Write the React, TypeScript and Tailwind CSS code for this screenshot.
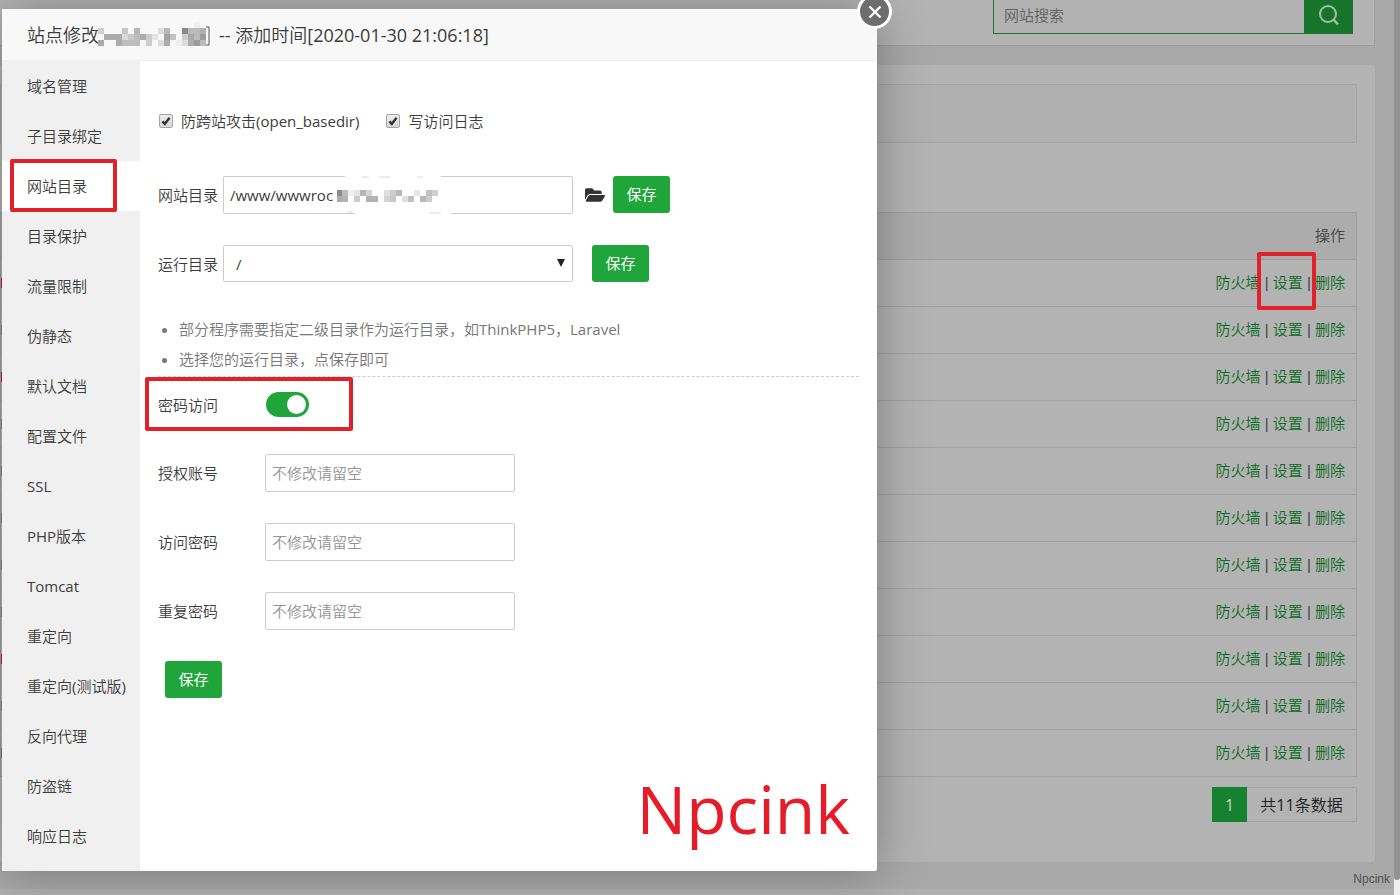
import { FaFolderOpen } from "react-icons/fa";

const menu = [
  "域名管理", "子目录绑定", "网站目录", "目录保护", "流量限制", "伪静态", "默认文档", "配置文件",
  "SSL", "PHP版本", "Tomcat", "重定向", "重定向(测试版)", "反向代理", "防盗链", "响应日志",
];

const rowMarks = [
  "bg-[#c41862]", "bg-[#8b8b7c]", "bg-[#c41862]", "bg-[#888888]", "bg-[#888888]", "bg-[#888888]",
  "bg-[#8b8b7c]", "bg-[#8b8b7c]", "bg-[#c41862]", "bg-[#8b8b7c]", "bg-[#7c7c6c]",
];

type Cell = [column: number, row: number, span: number, color: string];

const titleCells: Cell[] = [
  [1, 0, 1, "#d0d0d0"], [5, 0, 1, "#c6c6c6"], [7, 0, 1, "#b6b6b6"], [11, 0, 1, "#dddddd"], [12, 0, 1, "#b8b8b8"],
  [15, 0, 1, "#8a8a8a"], [16, 0, 2, "#bbbbbb"], [18, 0, 1, "#b0b0b0"],
  [2, 1, 3, "#acacac"], [5, 1, 1, "#dadada"], [6, 1, 1, "#c8c8c8"], [7, 1, 1, "#bcbcbc"], [8, 1, 1, "#acacac"],
  [9, 1, 1, "#cccccc"], [10, 1, 1, "#e4e4e4"], [12, 1, 1, "#a2a2a2"], [13, 1, 1, "#c2c2c2"], [15, 1, 1, "#cccccc"],
  [16, 1, 1, "#a8a8a8"], [17, 1, 1, "#bcbcbc"], [18, 1, 1, "#9c9c9c"],
  [1, 2, 1, "#aaaaaa"], [4, 2, 1, "#acacac"], [5, 2, 3, "#bdbdbd"], [9, 2, 1, "#cccccc"], [11, 2, 1, "#dddddd"],
  [12, 2, 1, "#acacac"], [14, 2, 1, "#eeeeee"], [15, 2, 1, "#dddddd"], [16, 2, 1, "#acacac"], [17, 2, 1, "#9c9c9c"],
  [18, 2, 1, "#bcbcbc"], [17, -1, 1, "#eeeeee"],
];

const pathCells: Cell[] = [
  [0, 0, 1, "#8c8c8c"], [1, 0, 1, "#bcbcbc"], [2, 0, 1, "#f0f0f0"], [3, 0, 1, "#e4e4e4"], [4, 0, 1, "#b6b6b6"],
  [5, 0, 1, "#d4d4d4"], [8, 0, 1, "#e0e0e0"], [9, 0, 1, "#cccccc"], [10, 0, 1, "#b8b8b8"], [13, 0, 1, "#e6e6e6"],
  [15, 0, 1, "#c0c0c0"], [16, 0, 1, "#d0d0d0"],
  [0, 1, 1, "#acacac"], [1, 1, 1, "#b4b4b4"], [3, 1, 1, "#cccccc"], [5, 1, 2, "#b2b2b2"], [8, 1, 1, "#d4d4d4"],
  [9, 1, 1, "#c8c8c8"], [11, 1, 1, "#e0e0e0"], [12, 1, 1, "#c0c0c0"], [14, 1, 1, "#b6b6b6"], [15, 1, 1, "#cccccc"],
];

function Cells({ data, x, y }: { data: Cell[]; x: number; y: number }) {
  return (
    <>
      {data.map(([column, row, span, color], i) => (
        <rect key={i} x={x + column * 6} y={y + row * 6} width={span * 6} height={6} fill={color} />
      ))}
    </>
  );
}

function SaveButton() {
  return (
    <button className="h-[37px] w-[57px] shrink-0 rounded-[3px] bg-[#20a53a] pb-0.5 font-['Noto_Sans_CJK_SC',sans-serif] text-[15px] font-normal text-white">
      保存
    </button>
  );
}

function Check({ label }: { label: string }) {
  return (
    <label className="flex items-center gap-2">
      <span className="relative flex h-[14px] w-[14px]">
        <input
          type="checkbox"
          defaultChecked
          className="h-[14px] w-[14px] appearance-none rounded-[2px] border border-[#a5a5a5] bg-linear-to-b from-[#eeeeee] to-[#d8d8d8]"
        />
        <svg viewBox="0 0 13 13" className="pointer-events-none absolute inset-0">
          <path d="M3.2 6.8 5.4 9.2 9.8 3.4" fill="none" stroke="#333" strokeWidth="2.3" />
        </svg>
      </span>
      {label}
    </label>
  );
}

function PasswordRow({ id, label, type }: { id: string; label: string; type: string }) {
  return (
    <div className="flex h-[37px] items-center">
      <label htmlFor={id} className="w-[107px]">{label}</label>
      <input
        id={id}
        type={type}
        placeholder="不修改请留空"
        className="h-[38px] w-[250px] rounded-[2px] border border-[#cccccc] bg-white px-1.5 placeholder:text-[#959595]"
      />
    </div>
  );
}

function Divider() {
  return <span className="font-['Liberation_Sans'] whitespace-pre text-[#444]"> | </span>;
}

function Backdrop() {
  return (
    <div className="flex min-h-screen bg-[#a8a8a8]">
      <main className="flex min-w-0 flex-1 flex-col">
        <header className="mr-[19px] flex h-[46px] items-start justify-end border-r border-b border-[#9d9d9d] bg-[#b3b3b3] pr-[21px]">
          <div className="flex h-[34px] w-[360px]">
            <input
              aria-label="网站搜索"
              placeholder="网站搜索"
              className="min-w-0 flex-1 border-b border-l border-[#177a2c] bg-[#b2b2b2] px-2.5 pb-1 placeholder:text-[#606060]"
            />
            <button aria-label="搜索" className="flex w-[49px] items-center justify-center bg-[#16752a] pb-1">
              <svg viewBox="0 0 22 22" className="h-[22px] w-[22px]" fill="none" stroke="#a2c0a0" strokeWidth="2">
                <circle cx="10" cy="10" r="8" />
                <path d="m15.5 15.5 4.5 5" strokeWidth="2.6" />
              </svg>
            </button>
          </div>
        </header>
        <section className="mt-[19px] mr-[19px] flex h-[797px] flex-col rounded-[3px] bg-[#b3b3b3] pt-[19px] pr-[18px]">
          <div className="h-[59px] border border-[#a5a5a5] bg-[#b0b0b0]" />
          <table className="mt-[69px] w-full border-collapse border border-[#a0a0a0]">
            <thead>
              <tr className="h-[47px] bg-[#acacac] text-[#444]">
                <th className="w-1/2 border-b border-[#a0a0a0]"><span className="sr-only">网站名</span></th>
                <th className="border-b border-[#a0a0a0] pr-[11px] pb-0.5 text-right font-normal">操作</th>
              </tr>
            </thead>
            <tbody>
              {rowMarks.map((mark, i) => (
                <tr key={i} className="h-[47px] border-b border-[#a0a0a0]">
                  <td className="p-0"><div className={`h-2.5 w-0.5 ${mark}`} /></td>
                  <td className="pr-[11px] pb-0.5 text-right whitespace-nowrap text-[#0c6a24]">
                    <a href="#firewall">防火墙</a>
                    <Divider />
                    <a href="#settings">设置</a>
                    <Divider />
                    <a href="#delete">删除</a>
                  </td>
                </tr>
              ))}
            </tbody>
          </table>
          <nav className="mt-[10px] flex h-[35px] justify-end text-base text-[#222]">
            <button className="w-[35px] bg-[#16812e] text-[#c8d4c8]">1</button>
            <span className="flex w-[110px] items-center justify-center border border-l-0 border-[#a3a3a3]">共11条数据</span>
          </nav>
        </section>
        <footer className="flex flex-1 items-end justify-end border-b-[6px] border-[#b0b0b0] pr-1 font-['Liberation_Sans'] text-xs leading-5 text-[#505050]">
          Npcink
        </footer>
      </main>
      <div className="w-[6px] bg-[#eeeeee] pb-[15px]">
        <div className="h-full rounded-b-full bg-[#929292]" />
      </div>
    </div>
  );
}

function Dialog() {
  return (
    <div role="dialog" aria-label="站点修改" className="absolute top-[9px] left-[2px] flex w-[875px] flex-col rounded-[2px] bg-white text-[#3c3c3c] shadow-[1px_1px_50px_rgba(0,0,0,0.3)]">
      <header className="flex h-[52px] items-center border-b border-[#eeeeee] bg-[#f8f8f8] px-[25px] text-lg">
        <h1 className="flex items-center font-normal">
          站点修改
          <svg viewBox="0 0 116 36" className="mr-2 -ml-1 h-9 w-[116px]">
            <Cells data={titleCells} x={-3} y={11} />
            <path d="M111 10h3v18h-3" fill="none" stroke="#555" />
          </svg>
          -- 添加时间[2020-01-30 21:06:18]
        </h1>
      </header>
      <div className="flex">
        <nav className="flex w-[138px] shrink-0 flex-col bg-[#f0f0f0] pb-[10px]">
          {menu.map((item) => (
            <a
              key={item}
              href="#site"
              className={item === "网站目录" ? "h-[50px] bg-white pl-[25px] leading-[50px]" : "h-[50px] pl-[25px] leading-[50px] whitespace-nowrap"}
            >
              {item}
            </a>
          ))}
        </nav>
        <form className="flex min-w-0 flex-1 flex-col px-[18px] pt-12">
          <div className="ml-px flex h-[24px] items-center gap-[27px]">
            <Check label="防跨站攻击(open_basedir)" />
            <Check label="写访问日志" />
          </div>
          <div className="mt-[43px] flex h-[37px] items-center">
            <label htmlFor="path" className="w-[65px]">网站目录</label>
            <div className="relative">
              <input id="path" defaultValue="/www/wwwroc" className="h-[38px] w-[350px] rounded-[2px] border border-[#cccccc] px-1.5" />
              <svg viewBox="0 0 120 38" className="pointer-events-none absolute top-0 left-[114px] h-[38px] w-[120px]">
                <path d="M8 0h96M18 38h96" stroke="#fff" strokeWidth="3" />
                <path d="M24 1h8M42 1h12M80 1h6M10 36h5M92 37h12" stroke="#eeeeee" strokeWidth="2" />
                <Cells data={pathCells} x={-1} y={14} />
              </svg>
            </div>
            <button type="button" aria-label="选择目录" className="mr-2 ml-3 flex w-5 text-[20px] text-[#333]"><FaFolderOpen className="h-[18px] w-5" /></button>
            <SaveButton />
          </div>
          <div className="mt-8 flex h-[37px] items-center">
            <label htmlFor="run" className="w-[65px]">运行目录</label>
            <div className="relative mr-[19px]">
              <select id="run" className="h-[37px] w-[350px] appearance-none rounded-[2px] border border-[#cccccc] px-3 font-['Open_Sans',sans-serif] leading-5"><option>/</option></select>
              <svg viewBox="0 0 8 8" className="pointer-events-none absolute top-3.5 right-2 h-2 w-2"><path d="M0 0h8L4 8z" fill="#222" /></svg>
            </div>
            <SaveButton />
          </div>
          <ul className="mt-8 h-[63px] list-disc border-b border-dashed border-[#cccccc] pl-[21px] leading-[30px] text-[#777]">
            <li>部分程序需要指定二级目录作为运行目录，如ThinkPHP5，Laravel</li>
            <li>选择您的运行目录，点保存即可</li>
          </ul>
          <div className="flex h-[55px] items-center">
            <span className="w-[108px]">密码访问</span>
            <button type="button" role="switch" aria-checked="true" aria-label="密码访问" className="flex h-[25px] w-[43px] items-center justify-end rounded-full bg-[#20a53a] pr-[3px]">
              <span className="h-[19px] w-[19px] rounded-full bg-white" />
            </button>
          </div>
          <div className="mt-[22px] flex flex-col gap-8">
            <PasswordRow id="user" label="授权账号" type="text" />
            <PasswordRow id="password" label="访问密码" type="password" />
            <PasswordRow id="repeat" label="重复密码" type="password" />
          </div>
          <div className="mt-8 ml-[7px]"><SaveButton /></div>
        </form>
      </div>
      <button aria-label="关闭" className="absolute -top-[15px] -right-[15px] flex h-[35px] w-[35px] items-center justify-center rounded-full border-[3px] border-white bg-[#6d6d6d]">
        <svg viewBox="0 0 14 14" className="h-3.5 w-3.5"><path d="m1.5 1.5 11 11m0-11-11 11" stroke="#fff" strokeWidth="2.4" /></svg>
      </button>
      <p className="absolute right-[27px] bottom-[18px] font-['Open_Sans'] text-[66px] leading-[90px] font-normal text-[#e61c28]">Npcink</p>
    </div>
  );
}

export default function App() {
  return (
    <div className="relative min-h-screen overflow-hidden font-['Open_Sans','Noto_Sans_CJK_SC_DemiLight','Noto_Sans_CJK_SC',sans-serif] text-[15px] leading-6 font-normal">
      <Backdrop />
      <Dialog />
      <div className="pointer-events-none absolute top-[159px] left-[10px] h-[53px] w-[107px] rounded-[2px] border-4 border-[#e0202a]" />
      <div className="pointer-events-none absolute top-[377px] left-[145px] h-[54px] w-[208px] rounded-[2px] border-4 border-[#e0202a]" />
      <div className="pointer-events-none absolute top-[252px] right-[84px] h-[58px] w-[59px] rounded-[2px] border-4 border-[#e0202a]" />
    </div>
  );
}
